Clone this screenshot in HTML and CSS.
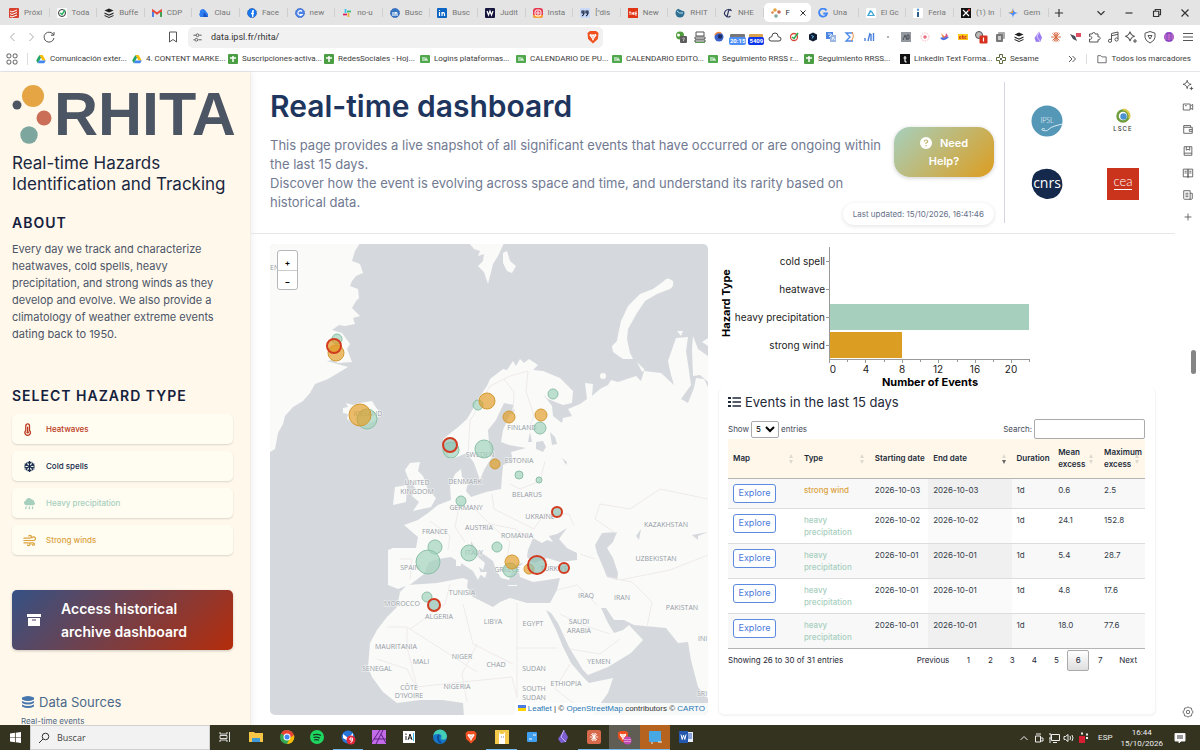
FILE: index.html
```html
<!DOCTYPE html>
<html lang="en">
<head>
<meta charset="utf-8">
<title>RHITA - Real-time dashboard</title>
<link rel="stylesheet" href="styles.css">
</head>
<body>
<svg class="defs" aria-hidden="true">
  <symbol id="drive" viewBox="0 0 10 10"><path d="M3.4 1h3.2l3.2 5.4H6.6z" fill="#fbbc04"/><path d="M3.4 1L.2 6.4 1.8 9.2 5 3.7z" fill="#1fa463"/><path d="M3.4 6.4h6.4L8.2 9.2H1.8z" fill="#4285f4"/></symbol>
  <symbol id="sheet" viewBox="0 0 10 10"><rect width="10" height="10" rx="1" fill="#4c9e45"/><path d="M2 4h6M5 2v6" stroke="#fff" stroke-width="1.5"/></symbol>
  <symbol id="card" viewBox="0 0 10 10"><rect y="1" width="10" height="8" rx="1" fill="#4fa84c"/><path d="M2 6h6M6 3.4v2.6M2 4h3" stroke="#fff" stroke-width="1.2"/></symbol>
  <symbol id="buffer" viewBox="0 0 10 10"><path d="M5 .5l4.500 2L5 4.500.5 2.500zM.5 4.500L5 6.500l4.500-2v1.200L5 7.700.5 5.700zM.5 6.900L5 8.900l4.500-2V8L5 10 .5 8z" fill="#222"/></symbol>
  <symbol id="brave" viewBox="0 0 12 14"><path d="M3 1h6l2.500 2-.6 6L6 13.500 1.100 9 .5 3z" fill="#f0501f"/><path d="M3 4l2 .5h2L9 4l.5 1.500L7.500 8 6 11 4.500 8l-2-2.500z" fill="#fff"/><path d="M4.500 5.800l1 .6M7.500 5.800l-1 .6M5.500 8h1" stroke="#f0501f" stroke-width=".7"/></symbol>
  <symbol id="burst" viewBox="0 0 12 12"><path d="M6 1v10M1 6h10M2.500 2.500l7 7M9.500 2.500l-7 7M4 1.400l4 9.200M8 1.400L4 10.600" stroke="currentColor" stroke-width="1"/></symbol>
  <symbol id="spark" viewBox="0 0 14 14"><path d="M6 1.500c.6 3 1.500 4 4.700 4.700C7.500 7 6.600 8 6 11.200 5.400 8 4.400 7 1.300 6.200 4.400 5.500 5.400 4.500 6 1.500zM11 9v4M9 11h4" fill="none" stroke="currentColor" stroke-width="1.100"/></symbol>
  <symbol id="globe" viewBox="0 0 10 10"><circle cx="5" cy="5" r="4.500" fill="#2d6f93"/><path d="M3 .8Q7 3 9.300 3.500L9 0H4z" fill="#e4e4e4"/><path d="M2 3q2 3 6 2" stroke="#bfe0ef" fill="none"/></symbol>
</svg>

<header class="tabs">
  <nav class="tab-list" aria-label="Open tabs">
    <span class="tab"><svg viewBox="0 0 10 10"><rect width="10" height="10" rx="1" fill="#d6402c"/><path d="M1 3l2 1 5-2M1 5.500l2 1 5-2M1 8l2 1 5-2" stroke="#fff" fill="none"/></svg><b>Próxi</b></span>
    <span class="tab"><svg viewBox="0 0 10 10"><rect width="10" height="10" rx="1" fill="#fff"/><circle cx="5" cy="5" r="3.500" fill="none" stroke="#333"/><path d="M3 5l2 1.500L8 2" stroke="#26b35d" fill="none" stroke-width="1.500"/></svg><b>Toda</b></span>
    <span class="tab"><svg viewBox="0 0 10 10"><use href="#buffer"/></svg><b>Buffe</b></span>
    <span class="tab"><svg viewBox="0 0 10 10"><path d="M1 8.500V2.500l4 3 4-3v6" fill="none" stroke="#ea4335" stroke-width="1.800"/><path d="M1 4v5" stroke="#4285f4" stroke-width="1.800"/><path d="M9 4v5" stroke="#34a853" stroke-width="1.800"/></svg><b>CDP</b></span>
    <span class="tab"><svg viewBox="0 0 10 10"><path d="M1 8a2 2 0 010-3 3 3 0 015-3l3 4v3H1z" fill="#2f7ff2"/><path d="M5 4l4 5H4z" fill="#1a56c4"/></svg><b>Clau</b></span>
    <span class="tab"><svg viewBox="0 0 10 10"><circle cx="5" cy="5" r="4.500" fill="#1877f2" stroke="#1c4ea0" stroke-dasharray="1 .6"/><path d="M7 3H5.700v6M4 5.500h3" stroke="#fff" stroke-width="1.300" fill="none"/></svg><b>Face</b></span>
    <span class="tab"><svg viewBox="0 0 10 10"><circle cx="5" cy="5" r="4.500" fill="#4e83e8" stroke="#2459bb" stroke-dasharray="1 .6"/><path d="M7 3.500a2.300 2.300 0 100 3H5" stroke="#fff" stroke-width="1.200" fill="none"/></svg><b>new</b></span>
    <span class="tab"><svg viewBox="0 0 10 10"><path d="M3.500 1v4" stroke="#36c5f0" stroke-width="1.700"/><path d="M5 3.500h4" stroke="#2eb67d" stroke-width="1.700"/><path d="M6.500 5v4" stroke="#ecb22e" stroke-width="1.700"/><path d="M1 6.500h4" stroke="#e01e5a" stroke-width="1.700"/></svg><b>no-u</b></span>
    <span class="tab"><svg viewBox="0 0 10 10"><circle cx="5" cy="5" r="4.500" fill="#3675bf" stroke="#2459bb" stroke-dasharray="1 .6"/><path d="M3 4v4M5 8V4M5 5.500q2-2 2 .5v2" stroke="#fff" stroke-width="1.100" fill="none"/></svg><b>Busc</b></span>
    <span class="tab"><svg viewBox="0 0 10 10"><rect width="10" height="10" rx="1" fill="#0a66c2"/><path d="M2.500 4v4M5 8V4M5 5.500q2-2 2.500.5v2M2.500 2v1" stroke="#fff" stroke-width="1.200" fill="none"/></svg><b>Busc</b></span>
    <span class="tab"><svg viewBox="0 0 10 10"><rect width="10" height="10" rx="1" fill="#14143c"/><path d="M2 3l1.500 4L5 3l1.500 4L8 3" stroke="#fff" stroke-width="1.200" fill="none"/></svg><b>Judit</b></span>
    <span class="tab"><svg viewBox="0 0 10 10"><rect width="10" height="10" rx="3" fill="#e8384f"/><path d="M0 7h10v1a2 2 0 01-2 2H2a2 2 0 01-2-2z" fill="#f9a33b"/><rect x="2" y="2" width="6" height="6" rx="2" fill="none" stroke="#fff"/><circle cx="5" cy="5" r="1.200" fill="none" stroke="#fff"/></svg><b>Insta</b></span>
    <span class="tab"><svg viewBox="0 0 10 10"><rect width="10" height="10" rx="1" fill="#c9daf8"/><path d="M4 6V3H2v2h2q0 2-2 3M8 6V3H6v2h2q0 2-2 3" stroke="#14213d" stroke-width="1.100" fill="none"/></svg><b>["dis</b></span>
    <span class="tab"><svg viewBox="0 0 10 10"><rect width="10" height="10" fill="#e03414"/><path d="M1 4h2M2 4v3M4 4v3M4 5.500h1.500M5.500 4v3M7 4h2M7 5.500h2M7 7h2M7 4v3" stroke="#fff" stroke-width=".8"/></svg><b>New</b></span>
    <span class="tab"><svg viewBox="0 0 10 10"><use href="#globe"/></svg><b>RHIT</b></span>
    <span class="tab"><svg viewBox="0 0 10 10"><path d="M7.500 2.500A3.600 3.600 0 107.500 8M6 1l-2 8M7 1l1.500 2" stroke="#28305c" stroke-width="1.100" fill="none"/></svg><b>NHE</b></span>
    <span class="tab active"><svg viewBox="0 0 10 10"><circle cx="4" cy="2" r="1.800" fill="#e6a23c"/><circle cx="8" cy="4" r="1.800" fill="#cb6d56"/><circle cx="1.500" cy="4.500" r="1.200" fill="#e07c3d"/><circle cx="5" cy="8" r="1.800" fill="#7da89e"/></svg><b>F</b><button class="tab-close" aria-label="Close tab"><svg viewBox="0 0 8 8"><path d="M1.500 1.500l5 5M6.500 1.500l-5 5" stroke="#333"/></svg></button></span>
    <span class="tab"><svg viewBox="0 0 10 10"><path d="M8.500 2.500a4 4 0 10.5 3H5.300" stroke="#4285f4" stroke-width="1.800" fill="none"/></svg><b>Una</b></span>
    <span class="tab"><svg viewBox="0 0 10 10"><rect width="10" height="10" rx="1" fill="#fff"/><path d="M1 8l3-6 2 1 3 5z" fill="#3ea6d8"/><path d="M3 7l2-3 2 3z" fill="#fff"/></svg><b>El Gc</b></span>
    <span class="tab"><svg viewBox="0 0 10 10"><rect width="10" height="10" rx="1" fill="#fff"/><path d="M5 4v5" stroke="#2d5d8e" stroke-width="2"/><circle cx="5" cy="1.800" r="1.200" fill="#5f9ad0"/></svg><b>Feria</b></span>
    <span class="tab"><svg viewBox="0 0 10 10"><rect width="10" height="10" fill="#111"/><path d="M2 2l6 6M8 2L2 8" stroke="#fff" stroke-width="1.200"/><circle cx="8" cy="2" r="1.200" fill="#d33"/></svg><b>(1) In</b></span>
    <span class="tab"><svg viewBox="0 0 10 10"><path d="M5 0c.5 3.500 1.500 4.500 5 5-3.500.5-4.500 1.500-5 5-.5-3.500-1.500-4.500-5-5 3.500-.5 4.500-1.500 5-5z" fill="#4b8bf5"/><path d="M0 5c3.500-.5 4.500-1.500 5-5v5z" fill="#e8a33c"/></svg><b>Gem</b></span>
  </nav>
  <div class="window-buttons">
    <button aria-label="New tab"><svg viewBox="0 0 12 12"><path d="M6 2.500v7M2.500 6h7"/></svg></button>
    <span class="spacer"></span>
    <button aria-label="Tab list"><svg viewBox="0 0 12 12"><path d="M3 4.500l3 3 3-3"/></svg></button>
    <button aria-label="Minimize"><svg viewBox="0 0 12 12"><path d="M3 6h6"/></svg></button>
    <button aria-label="Restore"><svg viewBox="0 0 12 12"><path d="M3 4.500h4.500V9H3zM4.500 4.500V3H9v4.500H7.500"/></svg></button>
    <button aria-label="Close"><svg viewBox="0 0 12 12"><path d="M3 3l6 6M9 3L3 9"/></svg></button>
  </div>
</header>

<div class="toolbar">
  <div class="nav-buttons">
    <button class="dim" aria-label="Back"><svg viewBox="0 0 14 14"><path d="M8.500 3l-4 4 4 4"/></svg></button>
    <button class="dim" aria-label="Forward"><svg viewBox="0 0 14 14"><path d="M5.500 3l4 4-4 4"/></svg></button>
    <button aria-label="Reload"><svg viewBox="0 0 14 14"><path d="M11.600 5A5 5 0 1012 8M12 2v3.200H9"/></svg></button>
  </div>
  <button class="save-mark" aria-label="Bookmark"><svg viewBox="0 0 14 14"><path d="M3.500 2h7v10L7 9.500 3.500 12z"/></svg></button>
  <div class="address">
    <svg viewBox="0 0 12 12"><path d="M1.500 3.500h3M8 3.500h2.500M1.500 8.500H3M7 8.500h3.500"/><circle cx="6" cy="3.500" r="1.500"/><circle cx="4.800" cy="8.500" r="1.500"/></svg>
    <input type="text" value="data.ipsl.fr/rhita/" aria-label="Address">
    <svg class="shield" viewBox="0 0 12 14"><use href="#brave"/></svg>
  </div>
  <div class="extensions">
    <span><svg viewBox="0 0 14 14"><circle cx="6" cy="5.500" r="4" fill="#4f9d3a"/><circle cx="4.500" cy="5" r="1.500" fill="#fff"/><rect x="6" y="6" width="7" height="7" rx="1" fill="#5d5d5d"/><path d="M8.500 8.500q1-1 2 0l-1 1.500v1" stroke="#ddd" fill="none" stroke-width=".8"/></svg></span>
    <span><svg viewBox="0 0 14 14"><path d="M3 2h8v4H3zM2 7h10v2H2zM2 10h10v2H2z" fill="none" stroke="#555"/><path d="M2 12.500h10" stroke="#54a04b"/></svg></span>
    <span><svg viewBox="0 0 14 14"><circle cx="7" cy="7" r="4.500" fill="#3c62c9"/><circle cx="8" cy="6.500" r="2.200" fill="#1d2e66"/><path d="M3 5a4.500 4.500 0 016-2" stroke="#ef8b3d" stroke-width="1.500" fill="none"/></svg></span>
    <span><i class="count light">20:15</i></span>
    <span><i class="count">5409</i></span>
    <span><svg viewBox="0 0 14 14"><path d="M3 11a2 2 0 010-4q1 0 1-1a3 3 0 016 0q0 1 1 1a2 2 0 010 4z" fill="none" stroke="#444"/></svg></span>
    <span><svg viewBox="0 0 14 14"><circle cx="7" cy="7" r="3.500" fill="none" stroke="#d54c3b" stroke-width="1.300"/><path d="M5 7l2 1.500L11 3" stroke="#23a84c" fill="none" stroke-width="1.500"/></svg></span>
    <span><svg viewBox="0 0 14 14"><path d="M7 2.500l4 2v5l-4 2-4-2v-5z" fill="#111d33"/><path d="M5.500 5.500l2 1-1.500 2" stroke="#6cf" fill="none"/></svg></span>
    <span><svg viewBox="0 0 14 14"><rect x="2" y="2" width="7" height="7" fill="#4e86e4"/><rect x="6" y="5" width="6" height="7" fill="#9bb8e3"/><path d="M4 4h3M5 7l3-3M8 10l1-3 2 3" stroke="#fff" fill="none" stroke-width=".8"/></svg></span>
    <span><svg viewBox="0 0 14 14"><path d="M10 3H3l4 4-4 4h7" fill="none" stroke="#4a87e8" stroke-width="1.300"/><path d="M9 2q3 5-1 9" stroke="#e9893d" fill="none"/></svg></span>
    <span><svg viewBox="0 0 14 14"><path d="M3 11V8M6 11l2-8M9 11V4M11.500 11V3" stroke="#4a80dd" stroke-width="1.400"/></svg></span>
    <span><svg viewBox="0 0 14 14"><circle cx="7" cy="7" r="1" fill="#999"/></svg></span>
    <span><svg viewBox="0 0 14 14"><rect x="2" y="2" width="10" height="10" fill="#9499a0"/><path d="M4 10l2-5 2 5M8 5h2v4H8z" stroke="#4c5158" fill="none"/></svg></span>
    <span><svg viewBox="0 0 14 14"><circle cx="7" cy="7" r="4" fill="none" stroke="#f3b7bd" stroke-dasharray="1.500 1"/><circle cx="7" cy="7" r="1.800" fill="#e8727f"/></svg></span>
    <span><svg viewBox="0 0 14 14"><path d="M3 8q4 5 9-1L9 6z" fill="#4f72e3"/><path d="M4 3l4 4-2 1z" fill="#f0803c"/><path d="M9 3l2 3-3 2z" fill="#e64b77"/></svg></span>
    <span><svg viewBox="0 0 14 14"><rect x="2" y="4" width="10" height="6" fill="#ffc91c"/><path d="M3.500 8.500V6.500h1.500v2zM6.500 5v3.500H8v-2H6.500M10.500 6.500H9v2h1.500" stroke="#d53b20" fill="none" stroke-width=".9"/></svg></span>
    <span><svg viewBox="0 0 14 14"><circle cx="5" cy="5" r="3.500" fill="#bbb" stroke="#555"/><rect x="5.500" y="5.500" width="8" height="8" rx="1" fill="#d7301c"/><path d="M9.500 7.500v4" stroke="#fff" stroke-width="1.200"/></svg></span>
    <span><svg viewBox="0 0 14 14"><rect x="5" y="2" width="7" height="7" rx="1" fill="#aaa"/><rect x="3" y="4" width="7" height="8" rx="1" fill="#777"/><path d="M5 6h3v4H5z" fill="#ccc"/></svg></span>
    <span><svg viewBox="0 0 14 14"><use href="#buffer" x="2" y="2" width="10" height="10"/></svg></span>
    <span><svg viewBox="0 0 14 14"><path d="M8 1.500l3 6-1.500 4L5 12 3.500 8z" fill="#9b7df0"/><path d="M8 2L6 7l3 4" stroke="#d9ccff" fill="none"/></svg></span>
    <span class="clay"><svg viewBox="0 0 14 14"><use href="#burst" x="1" y="1" width="12" height="12"/></svg></span>
    <span><svg viewBox="0 0 14 14"><path d="M2 4l5 2 2 5-4-2z" fill="#454d59"/><rect x="8" y="3" width="5" height="4" fill="#df5064"/></svg></span>
    <span class="line"><svg viewBox="0 0 14 14"><path d="M2.500 4h2.700a1.500 1.500 0 113 0H11v3a1.500 1.500 0 110 2.600V12H2.500V9a1.500 1.500 0 100-2.500z"/></svg></span>
    <span class="line"><svg viewBox="0 0 14 14"><path d="M5.500 10.500V3.500L12 2v7M5.500 5.800L12 4.300"/><circle cx="4" cy="10.800" r="1.600"/><circle cx="10.500" cy="9.500" r="1.600"/></svg></span>
    <span class="line"><svg viewBox="0 0 14 14"><use href="#spark"/></svg></span>
    <span class="line"><svg viewBox="0 0 14 14"><path d="M7 1.500l5 1.700v4Q12 10.500 7 13 2 10.500 2 7.200v-4z"/><path d="M5 5.500h4L7 9z"/></svg></span>
    <span><svg viewBox="0 0 14 14"><circle cx="7" cy="7" r="5" fill="#9647c7"/><path d="M3 5h8M2.500 7h9M3 9h8" stroke="#e988c8" stroke-width=".9"/><path d="M5 2.500v9M9 2.500v9" stroke="#5940c0" stroke-width=".7"/></svg></span>
    <span class="line"><svg viewBox="0 0 14 14"><path d="M2 3.500h10M2 7h10M2 10.500h10"/></svg></span>
  </div>
</div>

<nav class="bookmarks" aria-label="Bookmarks">
  <button class="apps" aria-label="Apps"><svg viewBox="0 0 12 12"><rect x="1" y="1" width="3.800" height="3.800" rx="1.200"/><rect x="7.200" y="1" width="3.800" height="3.800" rx="1.200"/><rect x="1" y="7.200" width="3.800" height="3.800" rx="1.200"/><rect x="7.200" y="7.200" width="3.800" height="3.800" rx="1.200"/></svg></button>
  <div class="mark-list">
    <a href="#"><svg><use href="#drive"/></svg>Comunicación exter...</a>
    <a href="#"><svg><use href="#drive"/></svg>4. CONTENT MARKE...</a>
    <a href="#"><svg><use href="#sheet"/></svg>Suscripciones-activa...</a>
    <a href="#"><svg><use href="#sheet"/></svg>RedesSociales - Hoj...</a>
    <a href="#"><svg><use href="#card"/></svg>Logins plataformas...</a>
    <a href="#"><svg><use href="#card"/></svg>CALENDARIO DE PU...</a>
    <a href="#"><svg><use href="#card"/></svg>CALENDARIO EDITO...</a>
    <a href="#"><svg><use href="#card"/></svg>Seguimiento RRSS r...</a>
    <a href="#"><svg><use href="#sheet"/></svg>Seguimiento RRSS...</a>
    <a href="#"><svg viewBox="0 0 10 10"><rect width="10" height="10" fill="#111"/><path d="M5 2v5q0 1 1.500.8M3.500 4h3" stroke="#fff" fill="none" stroke-width="1.200"/></svg>LinkedIn Text Forma...</a>
    <a href="#"><svg viewBox="0 0 10 10"><path d="M3.500.5h3v3h3v3h-3v3h-3v-3h-3v-3h3z" fill="none" stroke="#5d6b3c"/><circle cx="5" cy="5" r="1" fill="#333"/></svg>Sesame</a>
  </div>
  <button class="more" aria-label="More bookmarks"><svg viewBox="0 0 10 10"><path d="M2 2l3 3-3 3M5.500 2l3 3-3 3"/></svg></button>
  <a class="all-marks" href="#"><svg viewBox="0 0 12 12"><path d="M1 2h3.500L6 3.500h5V10.500H1z"/></svg>Todos los marcadores</a>
</nav>

<main class="window">
  <aside class="sidebar">
    <div class="brand">
      <svg viewBox="0 0 42 62"><circle cx="21" cy="13" r="11" fill="#e5a544"/><circle cx="5" cy="22" r="4.500" fill="#4c5561"/><circle cx="32" cy="35" r="7.500" fill="#cb6e58"/><circle cx="17" cy="52" r="8.700" fill="#7da69f"/></svg>
      <span>RHITA</span>
    </div>
    <p class="tagline">Real-time Hazards Identification and Tracking</p>
    <h2>ABOUT</h2>
    <p class="about">Every day we track and characterize heatwaves, cold spells, heavy precipitation, and strong winds as they develop and evolve. We also provide a climatology of weather extreme events dating back to 1950.</p>
    <h2 class="select-title">SELECT HAZARD TYPE</h2>
    <div class="hazards">
      <button class="hot"><svg viewBox="0 0 14 14"><path d="M3 3a2 2 0 014 0v5a3 3 0 11-4 0z" fill="none" stroke="currentColor" stroke-width="1.400"/><path d="M5 4v5" stroke="currentColor" stroke-width="1.400"/><circle cx="5" cy="10" r="1.300" fill="currentColor"/></svg>Heatwaves</button>
      <button class="cold"><svg viewBox="0 0 14 14"><path d="M7 1v12M1.800 4l10.400 6M12.200 4L1.800 10M5 2l2 2 2-2M5 12l2-2 2 2M1.500 6.500L4.400 5.600 3.800 2.700M12.500 7.500l-2.900.9.600 2.900M1.500 7.500l2.900.9-.6 2.900M12.500 6.500l-2.900-.9.600-2.900" fill="none" stroke="currentColor" stroke-width="1.300"/></svg>Cold spells</button>
      <button class="rain"><svg viewBox="0 0 14 14"><path d="M3.500 9a2.700 2.700 0 01-.5-5.300A3.600 3.600 0 019.500 2.700 2.600 2.600 0 0112 5a2.200 2.200 0 01-1 4z" fill="currentColor"/><path d="M3.500 10.800l-.5 1.700M7 10.800l-.3 1.700M10.500 10.800l-.3 1.700" stroke="currentColor" stroke-width="1.400" stroke-linecap="round"/></svg>Heavy precipitation</button>
      <button class="wind"><svg viewBox="0 0 14 14"><path d="M1 4.500h6.500a1.500 1.500 0 10-1.300-2.300M1 7h10.500A2 2 0 109.700 4M1 9.500h5a1.500 1.500 0 11-1.300 2.300M8 9.500h3a1.300 1.300 0 11-1.200 1.800" fill="none" stroke="currentColor" stroke-width="1.300" stroke-linecap="round"/></svg>Strong winds</button>
    </div>
    <button class="archive"><svg viewBox="0 0 14 14"><path d="M0 1h14v3H0zM1 5h12v8H1z" fill="#fff"/><path d="M5 7h4" stroke="#553a5e"/></svg><span>Access historical archive dashboard</span></button>
    <section class="sources">
      <h3><svg viewBox="0 0 14 14"><path d="M1 2.500v2q6 3 12 0v-2q-6-3-12 0zM1 6v2q6 3 12 0V6Q7 9 1 6zM1 9.500v2q6 3 12 0v-2q-6 3-12 0z" fill="#4676ad"/></svg>Data Sources</h3>
      <p>Real-time events</p>
    </section>
  </aside>

  <div class="content">
    <section class="intro">
      <div class="intro-text">
        <h1>Real-time dashboard</h1>
        <p>This page provides a live snapshot of all significant events that have occurred or are ongoing within the last 15 days.<br>Discover how the event is evolving across space and time, and understand its rarity based on historical data.</p>
      </div>
      <div class="help">
        <button><svg viewBox="0 0 12 12"><circle cx="6" cy="6" r="6" fill="#fff"/><path d="M4.300 4.600Q4.500 3 6 3t1.700 1.400Q7.700 5.400 6 6v1.100M6 8v1.200" fill="none" stroke="#c2b66e" stroke-width="1.200"/></svg>Need Help?</button>
        <span class="updated">Last updated: 15/10/2026, 16:41:46</span>
      </div>
      <div class="partners">
        <svg viewBox="0 0 32 32" role="img" aria-label="IPSL"><circle cx="16" cy="16" r="15.500" fill="#5597b7"/><text class="thin" x="16" y="18" font-size="7" fill="#fff" text-anchor="middle">IPSL</text><path d="M11 25q5 2 7-1 3-3 14-5M11 25q-1-2 3-1" stroke="#d7ebf3" fill="none"/></svg>
        <svg viewBox="0 0 32 32" role="img" aria-label="LSCE"><circle cx="16" cy="11" r="5.500" fill="none" stroke="#6d9d3c" stroke-width="2.500"/><path d="M16 4.500a6.500 6.500 0 016 9" stroke="#dcc94c" stroke-width="2" fill="none"/><circle cx="16.500" cy="11.500" r="3.200" fill="#4b90cf"/><text class="spaced" x="16" y="26" font-size="6" fill="#333" text-anchor="middle">LSCE</text></svg>
        <svg viewBox="0 0 32 32" role="img" aria-label="CNRS"><path d="M5 4Q15-2 24 3q9 6 7 17-4 12-16 11Q4 29 1 18 0 8 5 4z" fill="#14294b"/><text class="cnrs" x="16" y="20" font-size="14" fill="#fff" text-anchor="middle">cnrs</text></svg>
        <svg viewBox="0 0 32 32" role="img" aria-label="CEA"><rect width="32" height="32" fill="#cb341c"/><text class="thin" x="16" y="18" font-size="13" fill="#fff" text-anchor="middle">cea</text><path d="M7 21.500h18" stroke="#fff"/></svg>
      </div>
    </section>

    <div class="panels">
      <section class="map" aria-label="Map of events">
        <svg class="map-canvas" viewBox="0 0 438 471" preserveAspectRatio="xMidYMid slice">
          <g class="land">
            <path d="M0-1H90L85 7 82 17l8 3 3 9-7 3-4 5-2 5 8 3 1 9-3 3-4 7 8 8-7 2 2 6-10 2-6-1-7 5 10 3 8 11-3 5 5 13-14 1-6-3-5 1 21 6-20 12-13 5-5 9-7 8-10 6-8 9-2 8-5 9-3 16-5 3z"/>
            <path d="M73 164l5-1-2-4 7 2 7-2 12-2 3 5 5 7-5 8-12 5-10-3-6-4 1-5-5-1z"/>
            <path d="M199-1l5 6 6 2-2 5 6-2-1 7-5 5 6 6 4 12 5-20 5-8 6-13zM233 9l4-2 3 10 6 5-4 7-5-2-4-8z"/>
            <path d="M342 102l5-5 1-6 3-14 2-4 5-11 12-12 13-5 11-8q3-5 9 0 1 6-3 8l-13 5-12 7-8 12-9 16-1 10 3 14 3 6-10 0-10-7z"/>
            <circle cx="333" cy="132" r="3"/><path d="M367 118l8 8-3 2zM407 87h6l-2 5zM423 92l5 13 10 7v26l-8-7-7 1-1-27zM432 98l6-4v8z"/>
            <path d="M180 215l-5-10-2-10 14-11 10-9 6-10 5-10 9-13 3-7 13-10 4 1 6-9 3 5 4-7 4 4 5-4 9 6-5 5 10 1 17 7 13 13-1 12-9 2-15-6-5-5 9 12 1 10 9 7 1-5 9-2-4-7 12-5 7-5-2-16 8 1-1 12 8-7 8-4 3-5 7 2 18-6 5 5 3-10 17 2 13 12-3-10-3-14 8-23 12-1-2 14 3 20 2 14-10 14 7 4 6-15 2-10 8 1 5 10v311l-11-13-7-27-3-18-10 1-12-15-32-3-10-5-10 0-8-12-5 0 7 15 6 10 9-3 6-5 14 15-12 13-23 14-20 8-5-5-14-23-11-24-7-10-5-3 10 20 7 17 8 16 12 14 6 6 24-5-5 15-17 24H194l-1-14-20-3H150l-23 3-14-11-11-15-4-10 2-24 7-13 10-13 10-10 3-15 7-7 30-2 26-5 5 2-1 7 6 10 20 10 7-5 10-4 17 5h23l7-13 3-12-13 2-14 2-13-5-2-10 6-4-7 1-5 8-3 8-8-2-5-8-3-9-18-13-4-7 0 10 14 12-2 7-4-3 2 7-3 6-5-9-9-6-13-8-13 2-9 3-5 12-13 10-13 5-10-4V306l5-2h23l2-11-14-12 14-5 10-7 10-8 13-5-1-14 5-12 6-5 1 8 6 6-2 8 5 6 15-5 15-3 2-24 10-4-2-9 15-4-17-3-8-3 2-12 6-13 5-12-10-2-8 17-8 10 1 13 3 14-8 13-4 10-6-17-7-10-10 4z"/>
            <path d="M140 219l10-1-2 9 5 5 5 14 8 8-5 9-18 4 6-9-7-6 3-8-7-10-3-8zM125 243l12-2-1 17-13 3zM190 309l2 5-2 8zM207 328l10 0-2 6zM186 314h5v8h-5zM238 341h9v1h-9z"/>
          </g>
          <g class="water">
            <path d="M257 313l1-7 5-12 9 5 5-3 6 2-4-6 8-2 10-6-8 11 8 9 10 5v7l-17 2-13-4-13 5zM325 301l7-12 15-1-4 10-6 6 6 10 5 15-1 7-10-3-4-10-6-14zM266 198l7-1 3 6-3 5-7-3zM280 188l5 5 2 7-5 1zM292 214l5 4-1 3zM366 292l5-7-2 11zM422 291l16-3-10 4 0 4zM237 165l8 1-3 5zM260 188l-2 10 4 0z"/>
          </g>
          <path class="borders" d="M198 210l2-33 20-35 20-10 18-5-2 20 8 25-6 14M243 168l1-20-10-13M240 240l10 5 20-8 5-20M222 250l2 15 20 10 20 10 10-15 25 0 5 12M190 258l-5 25 10 15M160 277l20 15-2 14M130 315h12l-2 20M205 265l15 15 25 5 15 10M200 285l20-5 20 18-3 15M310 310l15 5M337 333l25 5 20 20-5 25M347 290l-22-15 5-15 30 5 30-20 48 10M350 336l50-10 38-15M287 346l20-5 20 20M290 370l20 10 30 10M300 405l30 5 20-15M247 359v45h40M193 360l10 40 40 20M117 383h20v20h-30M137 383l70 45M137 403l10 40 45-5 50-5 5 20M107 415l30 10 10 20M247 404v50M207 400l-15 30 5 28M300 420l-15 25 20 15 15 0M180 340l-5 20-35 25"/>
          <g class="labels">
            <text class="from-left" x="0" y="26">ENLAND</text><text x="98" y="172">ICELAND</text><text x="210" y="213">SWEDEN</text><text x="252" y="186">FINLAND</text><text x="249" y="219">ESTONIA</text><text x="195" y="240">DENMARK</text><text x="147" y="241">UNITED</text><text x="147" y="250">KINGDOM</text><text x="257" y="253">BELARUS</text><text x="196" y="266">GERMANY</text><text x="270" y="275">UKRAINE</text><text x="165" y="290">FRANCE</text><text x="209" y="286">AUSTRIA</text><text x="247" y="294">ROMANIA</text><text x="396" y="283">KAZAKHSTAN</text><text x="386" y="317">UZBEKISTAN</text><text x="140" y="326">SPAIN</text><text x="204" y="311">ITALY</text><text x="237" y="328">GREECE</text><text x="284" y="327">TÜRKİYE</text><text x="192" y="351">TUNISIA</text><text x="132" y="362">MOROCCO</text><text x="169" y="375">ALGERIA</text><text x="223" y="380">LIBYA</text><text x="263" y="382">EGYPT</text><text x="316" y="354">IRAQ</text><text x="352" y="356">IRAN</text><text x="412" y="366">PAKISTAN</text><text x="309" y="380">SAUDI</text><text x="309" y="389">ARABIA</text><text class="from-left" x="428" y="397">INI</text><text x="126" y="405">MAURITANIA</text><text x="151" y="420">MALI</text><text x="192" y="415">NIGER</text><text x="226" y="423">CHAD</text><text x="264" y="427">SUDAN</text><text x="329" y="420">YEMEN</text><text x="107" y="427">SENEGAL</text><text x="139" y="446">CÔTE</text><text x="139" y="454">D'IVOIRE</text><text x="187" y="445">NIGERIA</text><text x="264" y="447">SOUTH</text><text x="264" y="456">SUDAN</text><text x="296" y="442">ETHIOPIA</text><text class="from-left" x="427" y="452">SRI</text>
          </g>
          <g class="wet">
            <circle cx="67" cy="95" r="5"/><circle cx="97" cy="175" r="10"/><circle cx="208" cy="161" r="5"/><circle cx="283" cy="150" r="5"/><circle cx="270" cy="184" r="6"/><circle cx="214" cy="205" r="9"/><circle cx="249" cy="231" r="4"/><circle cx="269" cy="236" r="3"/><circle cx="181" cy="206" r="8"/><circle cx="191" cy="257" r="5"/><circle cx="165" cy="303" r="7"/><circle cx="158" cy="318" r="12"/><circle cx="199" cy="309" r="8"/><circle cx="227" cy="303" r="5"/><circle cx="240" cy="326" r="7"/><circle cx="157" cy="353" r="5"/>
          </g>
          <g class="windy">
            <circle cx="66" cy="109" r="8"/><circle cx="90" cy="171" r="11"/><circle cx="217" cy="157" r="8"/><circle cx="239" cy="173" r="6"/><circle cx="271" cy="171" r="6"/><circle cx="225" cy="220" r="5"/><circle cx="242" cy="318" r="7"/><circle cx="259" cy="325" r="5"/>
          </g>
          <g class="ongoing">
            <circle class="gold" cx="64" cy="102" r="7"/><circle cx="180" cy="201" r="7"/><circle cx="287" cy="268" r="5"/><circle cx="267" cy="321" r="9"/><circle cx="294" cy="324" r="5"/><circle cx="164" cy="361" r="6"/>
          </g>
        </svg>
        <div class="zoom"><button aria-label="Zoom in">+</button><button aria-label="Zoom out">−</button></div>
        <div class="credit"><svg viewBox="0 0 8 6"><path d="M0 0h8v3H0z" fill="#4c7be1"/><path d="M0 3h8v3H0z" fill="#ffd500"/></svg> <a href="#">Leaflet</a> | © <a href="#">OpenStreetMap</a> contributors © <a href="#">CARTO</a></div>
      </section>

      <div class="data">
        <svg class="chart" viewBox="0 0 438 144" role="img" aria-label="Number of events by hazard type">
          <rect x="111" y="60" width="200" height="26" fill="#a7cfbe"/>
          <rect x="111" y="88" width="73" height="26" fill="#dc9d23"/>
          <path class="axis" d="M111.500 3v112.500h200M108 17.500h3M108 45.500h3M108 73.500h3M108 101.500h3M111.500 115v4M129.500 115v3M147.500 115v4M166.500 115v3M184.500 115v4M202.500 115v3M220.500 115v4M239.500 115v3M257.500 115v4M275.500 115v3M293.500 115v4M311.500 115v3"/>
          <g text-anchor="end"><text x="107" y="21">cold spell</text><text x="107" y="49">heatwave</text><text x="107" y="77">heavy precipitation</text><text x="107" y="105">strong wind</text></g>
          <g text-anchor="middle"><text x="115" y="129">0</text><text x="148" y="129">4</text><text x="184" y="129">8</text><text x="220" y="129">12</text><text x="257" y="129">16</text><text x="293" y="129">20</text>
          <text class="axis-title" x="212" y="142">Number of Events</text>
          <text class="axis-title" transform="translate(12 59) rotate(-90)">Hazard Type</text></g>
        </svg>

        <section class="events">
          <h2><svg viewBox="0 0 13 12"><path d="M0 2h3M0 6h3M0 10h3" stroke-width="2.200" stroke="currentColor"/><path d="M4.500 2H13M4.500 6H13M4.500 10H13" stroke-width="1.600" stroke="currentColor"/></svg>Events in the last 15 days</h2>
          <div class="controls">
            <label>Show <select><option>5</option></select> entries</label>
            <label>Search: <input type="search"></label>
          </div>
          <table>
            <colgroup><col class="w-map"><col class="w-type"><col class="w-start"><col class="w-end"><col class="w-dur"><col class="w-mean"><col class="w-max"></colgroup>
            <thead><tr><th class="sort">Map</th><th class="sort">Type</th><th>Starting date</th><th class="sort down">End date</th><th>Duration</th><th class="sort">Mean excess</th><th class="sort">Maximum excess</th></tr></thead>
            <tbody>
              <tr><td><button>Explore</button></td><td class="strong">strong wind</td><td>2026-10-03</td><td>2026-10-03</td><td>1d</td><td>0.6</td><td>2.5</td></tr>
              <tr><td><button>Explore</button></td><td class="heavy">heavy precipitation</td><td>2026-10-02</td><td>2026-10-02</td><td>1d</td><td>24.1</td><td>152.8</td></tr>
              <tr><td><button>Explore</button></td><td class="heavy">heavy precipitation</td><td>2026-10-01</td><td>2026-10-01</td><td>1d</td><td>5.4</td><td>28.7</td></tr>
              <tr><td><button>Explore</button></td><td class="heavy">heavy precipitation</td><td>2026-10-01</td><td>2026-10-01</td><td>1d</td><td>4.8</td><td>17.6</td></tr>
              <tr><td><button>Explore</button></td><td class="heavy">heavy precipitation</td><td>2026-10-01</td><td>2026-10-01</td><td>1d</td><td>18.0</td><td>77.6</td></tr>
            </tbody>
          </table>
          <div class="table-foot">
            <span>Showing 26 to 30 of 31 entries</span>
            <nav class="pages" aria-label="Pages"><button>Previous</button><button>1</button><button>2</button><button>3</button><button>4</button><button>5</button><button class="current">6</button><button>7</button><button>Next</button></nav>
          </div>
        </section>
      </div>
    </div>
  </div>

  <nav class="rail" aria-label="Side panel">
    <button aria-label="Assistant"><svg viewBox="0 0 14 14"><use href="#spark"/></svg></button>
    <button aria-label="Talk"><svg viewBox="0 0 14 14"><path d="M1.500 3.500h8v7h-8zM9.500 6l3-2v6l-3-2M3.500 5.500h2"/></svg></button>
    <button aria-label="Wallet"><svg viewBox="0 0 14 14"><path d="M2 5V3h8v2M2 5h10v7H2zM12 7.500H8.500v2.200H12"/></svg></button>
    <button aria-label="Bookmarks"><svg viewBox="0 0 14 14"><path d="M2.500 2h9v10h-9zM2.500 9.500h9M5 2v4l2-1 2 1V2"/></svg></button>
    <button aria-label="Reading list"><svg viewBox="0 0 14 14"><path d="M1.500 2.500h5.500v9H1.500zM7 2.500h5.500v9H7zM3 5h2.500M3 7h2.500M8.500 5H11M8.500 7H11M7 11v2"/></svg></button>
    <button aria-label="News"><svg viewBox="0 0 14 14"><path d="M2 2h7.500v10H3q-1 0-1-1zM9.500 5H12v6q0 1-1 1H9M4 5h3.500M4 7h3.500M4 9h3.500"/></svg></button>
    <button aria-label="Add"><svg viewBox="0 0 14 14"><path d="M7 3v8M3 7h8"/></svg></button>
    <button class="gear" aria-label="Settings"><svg viewBox="0 0 14 14"><path d="M5.500 2L7 1l1.500 1 2.500.5.500 2.500L13 7l-1.500 2-.5 2.500-2.500.5L7 13l-1.500-1-2.500-.5L2.500 9 1 7l1.500-2L3 2.500z"/><circle cx="7" cy="7" r="2"/></svg></button>
    <span class="thumb"></span>
  </nav>
</main>

<footer class="taskbar">
  <button class="start" aria-label="Start"><svg viewBox="0 0 10 10"><path d="M0 1.300l4.500-.6v4H0zM5.200.6L10 0v4.700H5.200zM0 5.300h4.500v4L0 8.700zM5.200 5.300H10V10l-4.800-.6z" fill="#fff"/></svg></button>
  <label class="search"><svg viewBox="0 0 12 12"><circle cx="7.500" cy="4.500" r="3.300"/><path d="M5 7L1 11"/></svg><input type="text" placeholder="Buscar" aria-label="Buscar"></label>
  <div class="apps-bar">
    <button aria-label="Task view"><svg viewBox="0 0 16 16"><path d="M3 3v2h7V3M3 13v-2h7v2M3 6.500h7v3H3zM12.500 3v10" fill="none" stroke="#ddd"/></svg></button>
    <button aria-label="Files"><svg viewBox="0 0 16 16"><path d="M1 3h5l1 1h8v9H1z" fill="#f7c646"/><path d="M4 9h8v4H4z" fill="#3f9bd8"/></svg></button>
    <button aria-label="Chrome"><svg viewBox="0 0 16 16"><circle cx="8" cy="8" r="7" fill="#34a853"/><path d="M2 4.500A7 7 0 0115 8H8z" fill="#ea4335"/><path d="M15 6a7 7 0 01-7 9l3-6z" fill="#fbbc04"/><circle cx="8" cy="8" r="3.500" fill="#fff"/><circle cx="8" cy="8" r="2.500" fill="#4285f4"/></svg></button>
    <button aria-label="Spotify"><svg viewBox="0 0 16 16"><circle cx="8" cy="8" r="7" fill="#1ed760"/><path d="M4 6q4-1.500 8 .5M4.500 8.500q3-1 6.500.5M5 11q3-.7 5 .3" stroke="#17351f" stroke-width="1.200" fill="none"/></svg></button>
    <button class="open" aria-label="Mail"><svg viewBox="0 0 16 16"><circle cx="8" cy="8" r="6.500" fill="#2574d8"/><path d="M3 5l5 4 5-5v4L8 12 3 9z" fill="#fff"/><circle cx="11" cy="11" r="4.500" fill="#e3263c"/><path d="M12.500 11h-2.500V9h2.500v2q0 2-2 2.500" stroke="#fff" fill="none"/></svg></button>
    <button aria-label="Affinity"><svg viewBox="0 0 16 16"><rect x="1" y="1" width="14" height="14" fill="#c36be8"/><path d="M1 13L9 1M5 15l7-14M3 10h12M10 5l5 9" stroke="#5a2181" fill="none"/></svg></button>
    <button aria-label="iA Writer"><svg viewBox="0 0 16 16"><rect x="2" y="2" width="12" height="12" fill="#fff"/><path d="M5 7v4M5 4.500V6M7 11l2-6 2 6M8 9h2.500" stroke="#222" fill="none"/><path d="M12.500 4v8" stroke="#38c4ee"/></svg></button>
    <button aria-label="Edge"><svg viewBox="0 0 16 16"><circle cx="8" cy="8" r="7" fill="#1677c9"/><path d="M1 7a7 7 0 0114 1q-1 4-6 2 2-5-3-5-4 0-5 2z" fill="#44cdb6"/><path d="M7 6q-3 4 2 8" stroke="#0d4e98" stroke-width="2" fill="none"/></svg></button>
    <button aria-label="Brave"><svg viewBox="0 0 16 16"><use href="#brave" x="2" y="1" width="12" height="14"/></svg></button>
    <button class="open" aria-label="Llama"><svg viewBox="0 0 16 16"><rect x="1" y="1" width="14" height="14" fill="#f2c94b"/><path d="M5 15V3l1.500 2h3L11 3v12z" fill="#fff"/><path d="M7 8h.6M9 8h.6" stroke="#333"/></svg></button>
    <button aria-label="Notes"><svg viewBox="0 0 16 16"><rect x="3" y="3" width="10" height="10" rx="1" fill="#3fa0f0"/><path d="M5 10h3M9 6h3" stroke="#fff"/></svg></button>
    <button aria-label="Obsidian"><svg viewBox="0 0 16 16"><path d="M9 1l4 7-2 5-5 1-3-4z" fill="#7d5fd0"/><path d="M9 1L6 8l5 5" stroke="#c3b3f5" fill="none"/></svg></button>
    <button class="open" aria-label="Claude"><svg viewBox="0 0 16 16"><rect x="1" y="1" width="14" height="14" rx="2" fill="#d8694b"/></svg><svg class="over" viewBox="0 0 12 12"><use href="#burst"/></svg></button>
    <button class="open lit" aria-label="Brave profile"><svg viewBox="0 0 16 16"><use href="#brave" x="1" y="1" width="12" height="13"/><circle cx="11.500" cy="11.500" r="4" fill="#c14bb2"/><path d="M8 10.500h7M8 12.500h7" stroke="#eaa4dd" stroke-width=".8"/></svg></button>
    <button class="open hot-app" aria-label="Remote"><svg viewBox="0 0 16 16"><rect x="2" y="2" width="12" height="11" rx="1" fill="#48a8e4"/><path d="M5 13v2M11 13h4" stroke="#e8f4fb"/></svg></button>
    <button aria-label="Word"><svg viewBox="0 0 16 16"><rect x="6" y="3" width="9" height="10" fill="#e8eefb"/><path d="M10 5h4M10 7h4M10 9h4" stroke="#2b5dbd"/><rect x="1" y="2" width="9" height="12" fill="#2457ae"/><path d="M3 5.500l1.200 5L5.500 6l1.300 4.500L8 5.500" stroke="#fff" fill="none"/></svg></button>
  </div>
  <div class="tray">
    <svg viewBox="0 0 12 12"><path d="M2.500 8L6 4.500 9.500 8"/></svg>
    <svg viewBox="0 0 12 12"><path d="M2.500 4h5v6h-5zM7.500 6H10v3H7.500M3 2h5"/></svg>
    <svg viewBox="0 0 12 12"><path d="M3.500 2.500h8v6h-8zM5 10.500h4M1 2h2v4H1M2 6v5"/></svg>
    <svg viewBox="0 0 12 12"><path d="M1 4.500h1.500L5 2.500v7l-2.500-2H1zM7 4q1 2 0 4M9 3q2 3 0 6"/></svg>
    <svg viewBox="0 0 12 12"><rect x="1" y="4" width="6" height="7" stroke="none" fill="#d81e33"/><path d="M3 1.500h2M8 2.500h2M8 6h2" stroke-width="2"/></svg>
    <span>ESP</span>
    <time>16:44<br>15/10/2026</time>
    <svg viewBox="0 0 12 12"><path d="M1 1.500h10v7.500H7L5 11V9H1z" fill="#fff"/><path d="M3 4h6M3 6h6" stroke="#333"/></svg>
  </div>
</footer>
</body>
</html>
```
FILE: styles.css
```css
* { box-sizing: border-box; }
body {
  margin: 0;
  height: 100vh;
  display: flex;
  flex-direction: column;
  overflow: hidden;
  background: #fff;
  color: #1f2937;
  font: 8px/12px Inter, "Noto Sans", sans-serif;
}
button { margin: 0; padding: 0; border: 0; background: none; font: inherit; color: inherit; }
h1, h2, h3, p { margin: 0; }
a { text-decoration: none; color: inherit; }
svg { flex: none; display: block; }
.defs { position: absolute; width: 0; height: 0; }

/* Browser chrome */
.tabs, .toolbar, .bookmarks, .taskbar { flex: none; font-family: Roboto, "Noto Sans", sans-serif; }
.tabs { display: flex; height: 25px; background: #e4e4e4; padding-left: 2px; }
.tab-list { flex: 1; display: flex; min-width: 0; }
.tab { flex: 1 1 0; min-width: 0; display: flex; align-items: center; gap: 5px; padding: 0 4px 0 7px; position: relative; color: #777; }
.tab::after { content: ""; position: absolute; right: 0; top: 8px; height: 9px; border-right: 1px solid #cfcfcf; }
.tab svg { width: 10px; height: 10px; }
.tab b { flex: 1; font-weight: 400; white-space: nowrap; }
.tab.active { background: #fff; border-radius: 5px; margin: 3px 0; color: #333; }
.tab.active::after { display: none; }
.tab-close svg { width: 8px; height: 8px; }
.window-buttons { display: flex; width: 151px; align-items: center; padding: 0 8px 0 3px; gap: 14px; }
.window-buttons svg { width: 14px; height: 14px; fill: none; stroke: #333; }
.window-buttons .spacer { flex: 1; }

.toolbar { display: flex; align-items: center; height: 24px; padding-right: 3px; }
.toolbar svg { width: 14px; height: 14px; fill: none; stroke: #555; }
.toolbar .extensions svg { stroke: none; }
.nav-buttons { display: flex; gap: 4px; padding-left: 6px; width: 166px; }
.nav-buttons .dim svg { stroke: #aaa; }
.save-mark { margin-right: 8px; }
.address { flex: 1; display: flex; align-items: center; height: 21px; background: #f1f1f1; border-radius: 5px; padding: 0 4px; }
.address svg { width: 11px; height: 11px; }
.address input { flex: 1; min-width: 0; border: 0; background: none; font: 9px/14px Roboto, sans-serif; color: #333; padding: 0 8px; }
.address .shield { width: 12px; height: 14px; stroke: none; }
.extensions { display: flex; width: 525px; margin-left: 69px; }
.extensions span { flex: 1 1 0; display: flex; justify-content: center; align-items: center; min-width: 0; }
.extensions .line svg { stroke: #555; color: #555; }
.extensions .clay { color: #d9714d; }
.extensions .clay svg { stroke: #d9714d; }
.count { margin-top: 8px; padding: 0 1px; border-radius: 2px; background: #0b35e8; color: #fff; font: 700 6px/8px Roboto, sans-serif; box-shadow: 0 -4px 0 -1px #d8a24e; }
.count.light { background: #4f8ff5; box-shadow: 0 -4px 0 -1px #777; }

.bookmarks { display: flex; align-items: center; height: 23px; padding: 0 9px 2px 6px; border-bottom: 1px solid #e4e6ea; color: #3c3c3c; }
.apps svg { width: 12px; height: 12px; fill: none; stroke: #555; }
.apps { padding-right: 9px; border-right: 1px solid #ddd; margin-right: 8px; }
.mark-list { flex: 1; min-width: 0; display: flex; }
.mark-list a { flex: 0 0 96px; display: flex; align-items: center; gap: 4px; white-space: nowrap; }
.mark-list svg { width: 10px; height: 10px; }
.more { padding-right: 9px; border-right: 1px solid #ddd; }
.more svg, .all-marks svg { width: 10px; height: 10px; fill: none; stroke: #555; }
.all-marks { display: flex; align-items: center; gap: 5px; padding-left: 10px; white-space: nowrap; }

.window { flex: 1; min-height: 0; display: flex; }

/* Sidebar */
.sidebar { flex: none; width: 251px; padding: 11px 17px 0 12px; background: #fff8eb; overflow: hidden; border-right: 1px solid #f3eee4; box-shadow: 2px 0 5px #0000000d; }
.brand { display: flex; align-items: center; height: 62px; }
.brand svg { width: 42px; height: 62px; }
.brand span { font: 700 61px/62px "Liberation Sans", Arial, sans-serif; color: #4b5563; }
.tagline { margin-top: 8px; font-size: 17px; line-height: 21px; color: #1a2740; }
.sidebar h2 { margin-top: 18px; font-size: 14px; font-weight: 600; line-height: 20px; letter-spacing: 1px; color: #14213d; }
.about { margin-top: 8px; font-size: 11px; line-height: 17px; color: #4b5567; }
.sidebar .select-title { margin-top: 43px; }
.hazards { display: grid; gap: 7px; margin-top: 8px; }
.hazards button { display: flex; align-items: center; gap: 10px; height: 30px; padding-left: 11px; border-radius: 5px; background: #fffdf2; box-shadow: 0 1px 2px #00000024; font-weight: 500; }
.hazards svg { width: 13px; height: 13px; }
.hot { color: #bb3a20; }
.cold { color: #14294b; }
.rain { color: #a7cfbe; }
.wind { color: #dba13c; }
.archive { display: flex; align-items: center; gap: 20px; width: 100%; height: 60px; margin-top: 35px; padding: 0 15px; border-radius: 5px; background: linear-gradient(135deg, #355285, #b52c0a); box-shadow: 0 1px 3px #0003; color: #fff; font-size: 14px; font-weight: 600; line-height: 23px; text-align: left; }
.archive svg { width: 14px; height: 14px; }
.sources { padding: 42px 9px 0; color: #4b6889; }
.sources h3 { display: flex; align-items: center; gap: 4px; font-size: 13px; font-weight: 400; line-height: 20px; }
.sources svg { width: 14px; height: 14px; }
.sources p { margin-top: 3px; }

/* Main column */
.content { flex: 1; min-width: 0; display: flex; flex-direction: column; }
.intro { flex: none; display: flex; height: 162px; border-bottom: 1px solid #e4e6ea; padding: 10px 14px 10px 19px; }
.intro-text { flex: 1; padding-top: 4px; }
h1 { font-size: 30px; font-weight: 600; line-height: 40px; color: #1e355e; }
.intro-text p { margin-top: 10px; font-size: 13px; line-height: 19px; color: #717a92; }
.help { flex: none; width: 100px; margin: 0 10px; display: flex; flex-direction: column; align-items: flex-end; padding-top: 45px; }
.help button { flex: none; width: 100%; height: 50px; border-radius: 16px; padding: 0 22px; background: linear-gradient(135deg, #a6d0bd, #dd9d20); box-shadow: 0 1px 4px #0003; color: #fff; font-size: 11px; font-weight: 600; line-height: 18px; }
.help button svg { display: inline-block; width: 12px; height: 12px; margin-right: 8px; vertical-align: -2px; }
.updated { flex: none; margin-top: 26px; padding: 5px 10px; border-radius: 12px; background: #fff; box-shadow: 0 1px 4px #0000001f; color: #667089; white-space: nowrap; }
.partners { flex: none; width: 157px; border-left: 1px solid #d3d6dc; display: grid; grid-template-columns: 1fr 1fr; place-items: center; align-content: center; row-gap: 31px; padding-left: 4px; }
.partners svg { width: 32px; height: 32px; font-family: Inter, sans-serif; }
.partners .thin { font-family: Lato, sans-serif; font-weight: 300; }
.partners .cnrs { font-family: "Open Sans", sans-serif; }
.partners .spaced { font-weight: 500; letter-spacing: 1px; }

.panels { flex: 1; min-height: 0; display: grid; grid-template-columns: 1fr 1fr; gap: 10px; padding: 10px 19px; }
.map { position: relative; min-height: 0; overflow: hidden; border-radius: 5px; background: #d5d9dd; }
.map-canvas { width: 100%; height: 100%; }
.land { fill: #fafaf8; }
.water { fill: #d5d9dd; }
.borders { fill: none; stroke: #efeaec; }
.labels { font: 500 7px "Open Sans", sans-serif; fill: #949ba6; text-anchor: middle; stroke: #fafaf8; stroke-width: 1px; paint-order: stroke; }
.labels .from-left { text-anchor: start; }
.wet { fill: #a3d3bd; fill-opacity: .7; stroke: #8bc0a8; }
.windy { fill: #e0991f; fill-opacity: .65; stroke: #d39a35; }
.ongoing { fill: #8fbfb2; fill-opacity: .7; stroke: #d23b1f; stroke-width: 2px; }
.ongoing .gold { fill: #e0991f; }
.zoom { position: absolute; left: 7px; top: 6px; width: 21px; border: 1px solid #b5b8bb; border-radius: 3px; background: #fff; }
.zoom button { display: block; width: 100%; height: 19px; padding-top: 4px; color: #000; font-weight: 700; }
.zoom button + button { border-top: 1px solid #ccc; }
.credit { position: absolute; right: 0; bottom: 0; padding: 0 3px; background: #ffffffcc; color: #333; font: 8px/12px "Liberation Sans", Arial, sans-serif; white-space: nowrap; }
.credit a { color: #2a78b5; }
.credit svg { display: inline-block; width: 8px; height: 6px; }

.data { display: flex; flex-direction: column; min-width: 0; min-height: 0; }
.chart { width: 100%; font: 10px Inter, sans-serif; fill: #222; }
.axis { fill: none; stroke: #999; }
.axis-title { font-size: 11px; font-weight: 700; fill: #000; }
.events { flex: 1; padding: 4px 10px 0 9px; border: 1px solid #f4f5f6; border-top: 0; border-radius: 6px; box-shadow: 0 1px 2px #0000000d; }
.events h2 { display: flex; align-items: center; gap: 4px; font-size: 13px; font-weight: 400; line-height: 20px; color: #1f2937; }
.events h2 svg { width: 13px; height: 12px; }
.controls { display: flex; justify-content: space-between; align-items: center; margin-top: 7px; }
.controls label { display: flex; align-items: center; gap: 2px; color: #444b57; }
.controls select { width: 28px; height: 17px; padding: 0; border: 1px solid #aaa; border-radius: 2px; background: #fff; font: 8px Inter, sans-serif; }
.controls input { width: 111px; height: 20px; border: 1px solid #aaa; border-radius: 2px; }
table { width: 100%; table-layout: fixed; border-collapse: collapse; border-bottom: 1px solid #b5b5b5; color: #333c4a; }
.w-map { width: 17%; }
.w-type { width: 17%; }
.w-start { width: 14%; }
.w-end { width: 20%; }
.w-dur { width: 10%; }
.w-mean { width: 11%; }
.w-max { width: 11%; }
th { position: relative; height: 39px; padding: 0 0 0 5px; background: #fff8ea; border-bottom: 1px solid #b5b5b5; text-align: left; font-weight: 600; line-height: 12px; color: #222b3a; }
th:nth-child(3) { white-space: nowrap; }
.sort::before, .sort::after { content: ""; position: absolute; right: 6px; border: 2px solid transparent; }
.sort::before { top: 13px; border-bottom: 4px solid #ddd9d0; }
.sort::after { top: 21px; border-top: 4px solid #ddd9d0; }
.sort.down::after { border-top-color: #666; }
td { padding: 5px 0 5px 5px; border-top: 1px solid #dcdcdc; vertical-align: top; line-height: 12px; }
tbody tr:nth-child(odd) { background: #f8f8f8; }
td:nth-child(4) { background: #fafafa; }
tr:nth-child(odd) td:nth-child(4) { background: #f0f0f0; }
td button { display: block; width: 43px; height: 19px; border: 1px solid #5b8ae0; border-radius: 3px; background: #fff; color: #4b7bdc; font-size: 9px; }
td.strong { color: #dba13c; font-weight: 500; }
td.heavy { padding-right: 16px; color: #a7cfbe; font-weight: 500; }
.table-foot { display: flex; justify-content: space-between; align-items: center; padding-top: 1px; }
.pages { display: flex; }
.pages button { min-width: 22px; height: 21px; padding: 0 7px; border-radius: 2px; border: 1px solid transparent; }
.pages .current { border-color: #aaa; background: linear-gradient(#fff, #dedede); }

.rail { position: relative; flex: none; width: 25px; display: flex; flex-direction: column; align-items: center; padding: 6px 0; gap: 8px; }
.rail svg { width: 12px; height: 12px; margin: 1px; fill: none; stroke: #555; color: #555; }
.rail .gear { margin-top: auto; }
.thumb { position: absolute; right: 4px; top: 278px; width: 5px; height: 24px; border-radius: 3px; background: #858585; }

/* Taskbar */
.taskbar { display: flex; height: 25px; background: #343320; color: #eee; }
.start { width: 30px; display: grid; place-items: center; }
.start svg { width: 11px; height: 11px; }
.search { width: 180px; display: flex; align-items: center; gap: 7px; padding: 0 7px; background: #f2f2f2; border: 1px solid #d0d0d0; }
.search svg { width: 12px; height: 12px; fill: none; stroke: #333; }
.search input { flex: 1; min-width: 0; border: 0; padding: 0; background: none; font: 9px "Open Sans", sans-serif; }
.search input::placeholder { color: #444; }
.apps-bar { display: flex; width: 491px; }
.apps-bar button { flex: 1 1 0; display: grid; place-items: center; border-bottom: 1px solid transparent; }
.apps-bar svg { grid-area: 1 / 1; width: 16px; height: 16px; }
.apps-bar .over { width: 10px; height: 10px; color: #fff; }
.apps-bar .open { border-bottom-color: #76b9ed; }
.apps-bar .lit { background: #605e54; }
.apps-bar .hot-app { background: #b5631e; }
.tray { margin-left: auto; display: flex; align-items: center; gap: 3px; padding-right: 14px; }
.tray svg { width: 12px; height: 12px; fill: none; stroke: #eee; }
.tray span { margin: 0 5px; }
.tray time { margin-right: 8px; text-align: center; line-height: 11px; }
```
